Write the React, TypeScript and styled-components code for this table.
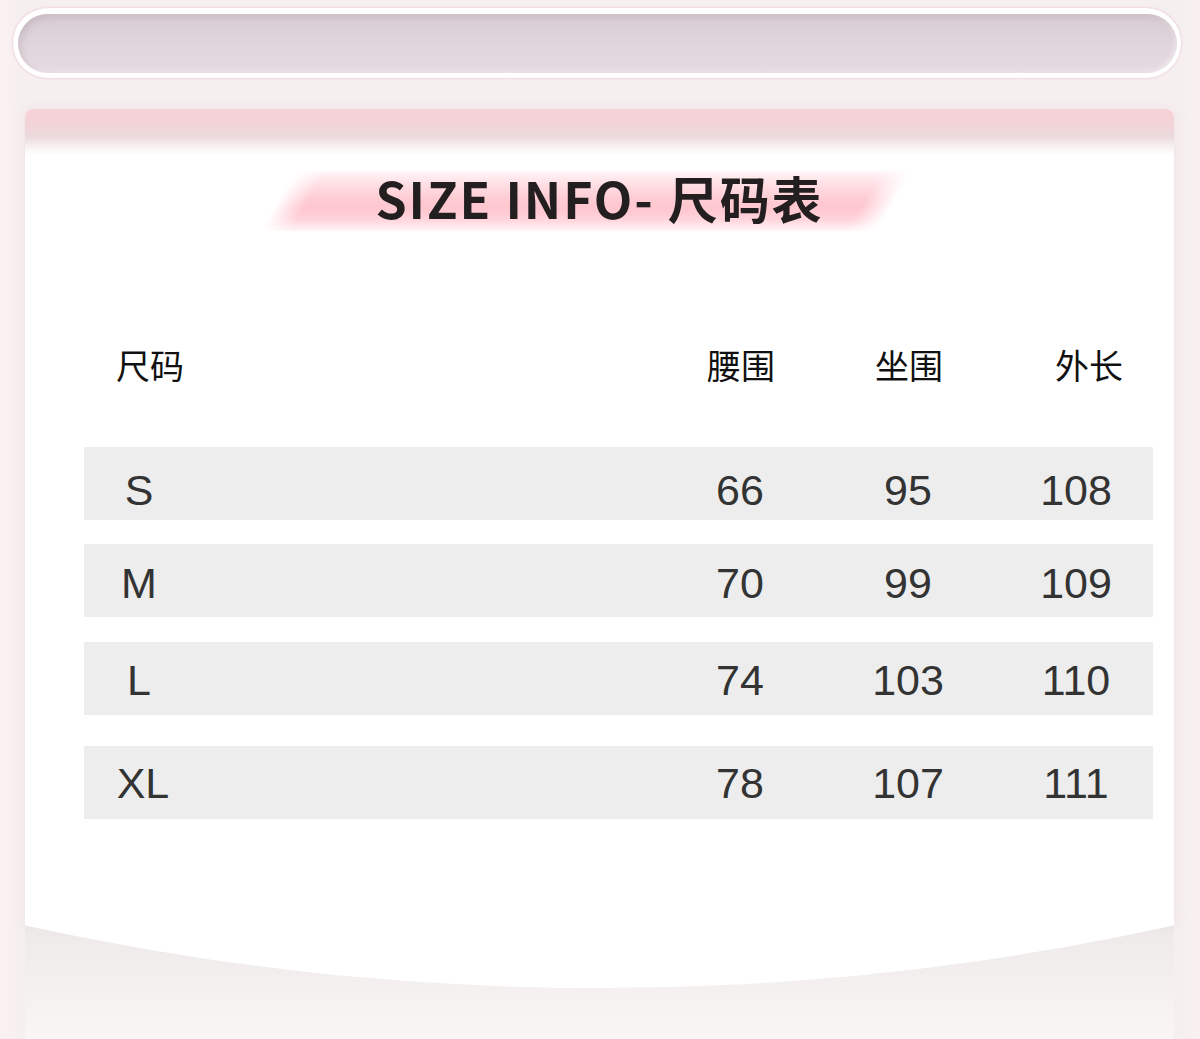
import React from 'react'
import styled, { createGlobalStyle } from 'styled-components'

const GlobalStyle = createGlobalStyle`
  html, body {
    margin: 0;
    padding: 0;
    background: #f6eff0;
  }
  * {
    box-sizing: border-box;
  }
`

const Page = styled.div`
  width: 1200px;
  height: 1039px;
  overflow: hidden;
  padding-top: 8px;
  background: linear-gradient(90deg, #fbf1f2 0px, #f6eff0 20px, #f6eff0 1180px, #f8f0f1 1200px);
  display: flex;
  flex-direction: column;
`

const PillFrame = styled.div`
  margin-left: 13px;
  width: 1168px;
  height: 70px;
  padding: 6px 4px 5px 5px;
  border-radius: 36px;
  background: #fff;
  box-shadow: 0 0 2px 1px rgba(236, 205, 212, 0.7);
`

const Pill = styled.div`
  width: 100%;
  height: 100%;
  border-radius: 30px;
  background: linear-gradient(180deg, #d8ccd3 0%, #e0d5db 50%, #e6dbe1 100%);
  box-shadow:
    inset 3px 3px 6px rgba(170, 150, 160, 0.35),
    inset -2px -1px 4px rgba(255, 255, 255, 0.5);
`

const Card = styled.div`
  margin: 31px 0 0 25px;
  width: 1149px;
  height: 816px;
  background: #fff;
  border-radius: 8px 8px 0 0;
  box-shadow: 0 0 14px rgba(215, 190, 196, 0.25);
  position: relative;
  display: flex;
  flex-direction: column;
`

const TopBand = styled.div`
  height: 46px;
  margin-bottom: -46px;
  border-radius: 8px 8px 0 0;
  background: linear-gradient(180deg, #f5d2d7 0px, #f4d3d7 14px, #ebdadc 28px, #f8f1f2 38px, #fff 46px);
`

const TitleWrap = styled.div`
  position: relative;
  margin-top: 58px;
  height: 60px;
  display: flex;
  justify-content: center;
`

const Brush = styled.div`
  position: absolute;
  left: 252px;
  top: 4px;
  width: 618px;
  height: 60px;
  transform: skewX(-30deg);
  filter: blur(5px);
  background: linear-gradient(
    180deg,
    rgba(255, 220, 226, 0.3) 0%,
    rgba(255, 210, 217, 0.8) 25%,
    rgba(255, 195, 204, 1) 60%,
    rgba(255, 203, 211, 0.85) 82%,
    rgba(255, 215, 221, 0.2) 100%
  );
  -webkit-mask-image: linear-gradient(90deg, transparent 0%, #000 5%, #000 95%, transparent 100%);
  mask-image: linear-gradient(90deg, transparent 0%, #000 5%, #000 95%, transparent 100%);
`

const Title = styled.h1`
  position: relative;
  margin: 0;
  font-family: "Noto Sans CJK SC", "Noto Sans", sans-serif;
  font-weight: 700;
  font-size: 50px;
  line-height: 60px;
  letter-spacing: 1.9px;
  color: #231f20;
  white-space: pre;
`

const Table = styled.div`
  padding: 0 21px 0 59px;
  display: flex;
  flex-direction: column;
`

const Grid = styled.div`
  display: grid;
  grid-template-columns: 110px 1fr 120px 120px 120px;
  column-gap: 48px;
  padding-right: 17px;
`

const HeadRow = styled(Grid)`
  margin-top: 121px;
  margin-bottom: 65px;
  height: 34px;
`

const HeadCell = styled.div<{ $shift?: number }>`
  text-align: center;
  padding-left: ${p => (p.$shift ?? 0) * 2}px;
  font-family: "Noto Sans CJK SC", sans-serif;
  font-weight: 400;
  font-size: 34px;
  line-height: 34px;
  color: #111;
  white-space: nowrap;
`

const Row = styled(Grid)<{ $gap: number; $pad: number }>`
  margin-top: ${p => p.$gap}px;
  height: 73px;
  padding-top: ${p => p.$pad}px;
  align-items: center;
  background: #ededed;
`

const Cell = styled.div<{ $shift?: number }>`
  text-align: center;
  padding-left: ${p => (p.$shift ?? 0) * 2}px;
  font-family: "Liberation Sans", Arial, sans-serif;
  font-size: 43px;
  line-height: 43px;
  color: #333;
`

const Base = styled.div`
  margin-left: 25px;
  width: 1149px;
  flex: 1;
  background: linear-gradient(180deg, #eeeaea 0%, #f2eeee 40%, #faf6f6 100%);
`

const Arc = styled.div`
  height: 63px;
  background: #fff;
  clip-path: circle(2666px at 50% -2603px);
`

const rows = [
  { size: 'S', waist: '66', hip: '95', length: '108', gap: 0, pad: 13 },
  { size: 'M', waist: '70', hip: '99', length: '109', gap: 24, pad: 5 },
  { size: 'L', waist: '74', hip: '103', length: '110', gap: 25, pad: 3 },
  { size: 'XL', waist: '78', hip: '107', length: '111', gap: 31, pad: 1, shift: 4 },
]

export default function App() {
  return (
    <>
      <GlobalStyle />
      <Page>
        <PillFrame>
          <Pill />
        </PillFrame>

        <Card>
          <TopBand />
          <TitleWrap>
            <Brush />
            <Title>SIZE INFO- 尺码表</Title>
          </TitleWrap>

          <Table>
            <HeadRow>
              <HeadCell $shift={11}>尺码</HeadCell>
              <div />
              <HeadCell $shift={1}>腰围</HeadCell>
              <HeadCell $shift={1}>坐围</HeadCell>
              <HeadCell $shift={13}>外长</HeadCell>
            </HeadRow>

            {rows.map(r => (
              <Row key={r.size} $gap={r.gap} $pad={r.pad}>
                <Cell $shift={r.shift}>{r.size}</Cell>
                <div />
                <Cell>{r.waist}</Cell>
                <Cell>{r.hip}</Cell>
                <Cell>{r.length}</Cell>
              </Row>
            ))}
          </Table>
        </Card>

        <Base>
          <Arc />
        </Base>
      </Page>
    </>
  )
}
